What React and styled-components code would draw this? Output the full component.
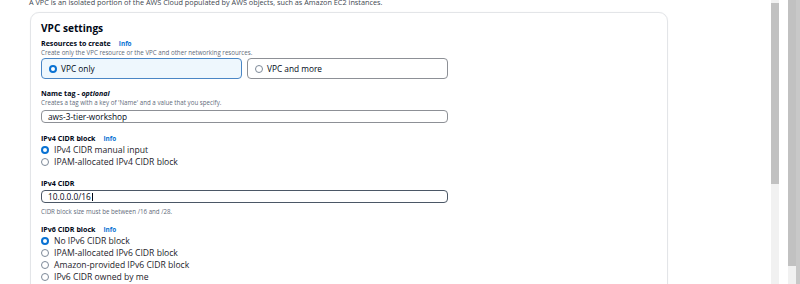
import React from 'react'
import styled, { createGlobalStyle } from 'styled-components'

const GlobalStyle = createGlobalStyle`
  html, body {
    margin: 0;
    padding: 0;
    background: #ffffff;
    overflow: hidden;
  }
  body {
    font-family: "Open Sans", "Noto Sans", sans-serif;
    color: #16191f;
  }
`

const Screen = styled.div`
  display: flex;
  width: 800px;
  height: 284px;
  overflow: hidden;
`

const Main = styled.div`
  flex: 1;
  padding-left: 29px;
  overflow: hidden;
`

const Intro = styled.p`
  margin: -3px 0 0;
  font-size: 7.3px;
  line-height: 10px;
  color: #414750;
  white-space: nowrap;
`

const Card = styled.section`
  margin: 5px 0 0 1px;
  width: 638px;
  height: 300px;
  box-sizing: border-box;
  border: 1px solid #e3e5e8;
  border-radius: 9px;
  padding: 8px 0 0 10px;
  box-shadow: 0 0 1px rgba(0, 7, 22, 0.08);
`

const Heading = styled.h2`
  margin: 0;
  font-size: 10.1px;
  line-height: 14px;
  font-weight: 700;
  color: #000716;
`

const Field = styled.div`
  width: 407px;
  margin-top: ${(p) => p.$top}px;
`

const Label = styled.div`
  display: flex;
  align-items: baseline;
  gap: 8px;
  height: 10px;
  font-size: 7.1px;
  line-height: 10px;
  font-weight: 700;
  color: #000716;

  em {
    font-style: italic;
  }
`

const Info = styled.span`
  font-size: 6.4px;
  line-height: 10px;
  font-weight: 700;
  color: #0972d3;
`

const Description = styled.div`
  font-size: 6.2px;
  line-height: 9px;
  color: #5f6b7a;
  white-space: nowrap;
`

const Tiles = styled.div`
  display: grid;
  grid-template-columns: 1fr 1fr;
  gap: 5px;
  margin-top: 1px;
`

const Tile = styled.div`
  height: 21px;
  box-sizing: border-box;
  display: flex;
  align-items: center;
  gap: 4px;
  padding-left: 7px;
  border-radius: 4px;
  border: ${(p) => (p.$selected ? '1.5px solid #4a86c5' : '1px solid #8d9096')};
  background: ${(p) => (p.$selected ? '#eef7fd' : '#ffffff')};
  font-size: 8.3px;
  color: #000716;
`

const Radio = styled.span`
  width: 8px;
  height: 8px;
  box-sizing: border-box;
  flex: none;
  border-radius: 50%;
  border: ${(p) => (p.$checked ? '2.4px solid #0972d3' : '1px solid #7d8998')};
  background: #ffffff;
`

const RadioList = styled.div`
  margin-top: 1px;
`

const RadioRow = styled.div`
  display: flex;
  align-items: center;
  gap: 5px;
  height: 12px;
  font-size: 8.6px;
  line-height: 12px;
  color: #1d232b;
`

const Input = styled.div`
  margin-top: ${(p) => p.$top}px;
  height: 13px;
  box-sizing: border-box;
  display: flex;
  align-items: center;
  padding-left: 6px;
  border-radius: 4px;
  border: ${(p) => (p.$focused ? '1.5px solid #4b5766' : '1px solid #8d9096')};
  font-size: 8.3px;
  color: #000716;
`

const Caret = styled.span`
  display: inline-block;
  width: 1px;
  height: 8px;
  background: #000716;
  margin-left: 1px;
`

const Hint = styled(Description)`
  margin-top: 4px;
`

const Scrollbar = styled.div`
  width: 8px;
  height: 284px;
  flex: none;
  background: #f1f1f1;
  display: flex;
  flex-direction: column;
  margin-left: ${(p) => p.$gap}px;
  padding-top: ${(p) => p.$offset}px;
  box-sizing: border-box;
`

const Thumb = styled.div`
  height: ${(p) => p.$size}px;
  background: #c1c1c1;
`

const Edge = styled.div`
  width: 4px;
  height: 284px;
  flex: none;
  background: #c8c8c8;
`

export default function App() {
  return (
    <>
      <GlobalStyle />
      <Screen>
        <Main>
          <Intro>
            A VPC is an isolated portion of the AWS Cloud populated by AWS objects, such as Amazon EC2 instances.
          </Intro>
          <Card>
            <Heading>VPC settings</Heading>

            <Field $top={3}>
              <Label>
                Resources to create <Info>Info</Info>
              </Label>
              <Description>Create only the VPC resource or the VPC and other networking resources.</Description>
              <Tiles>
                <Tile $selected>
                  <Radio $checked />
                  VPC only
                </Tile>
                <Tile>
                  <Radio />
                  VPC and more
                </Tile>
              </Tiles>
            </Field>

            <Field $top={9}>
              <Label>
                <span>
                  Name tag - <em>optional</em>
                </span>
              </Label>
              <Description>Creates a tag with a key of 'Name' and a value that you specify.</Description>
              <Input $top={3}>aws-3-tier-workshop</Input>
            </Field>

            <Field $top={10}>
              <Label>
                IPv4 CIDR block <Info>Info</Info>
              </Label>
              <RadioList>
                <RadioRow>
                  <Radio $checked />
                  IPv4 CIDR manual input
                </RadioRow>
                <RadioRow>
                  <Radio />
                  IPAM-allocated IPv4 CIDR block
                </RadioRow>
              </RadioList>
            </Field>

            <Field $top={10}>
              <Label>IPv4 CIDR</Label>
              <Input $top={2} $focused>
                10.0.0.0/16
                <Caret />
              </Input>
              <Hint>CIDR block size must be between /16 and /28.</Hint>
            </Field>

            <Field $top={8}>
              <Label>
                IPv6 CIDR block <Info>Info</Info>
              </Label>
              <RadioList>
                <RadioRow>
                  <Radio $checked />
                  No IPv6 CIDR block
                </RadioRow>
                <RadioRow>
                  <Radio />
                  IPAM-allocated IPv6 CIDR block
                </RadioRow>
                <RadioRow>
                  <Radio />
                  Amazon-provided IPv6 CIDR block
                </RadioRow>
                <RadioRow>
                  <Radio />
                  IPv6 CIDR owned by me
                </RadioRow>
              </RadioList>
            </Field>
          </Card>
        </Main>
        <Scrollbar $gap={0} $offset={3}>
          <Thumb $size={181} />
        </Scrollbar>
        <Scrollbar $gap={9} $offset={0}>
          <Thumb $size={266} />
        </Scrollbar>
        <Edge />
      </Screen>
    </>
  )
}
